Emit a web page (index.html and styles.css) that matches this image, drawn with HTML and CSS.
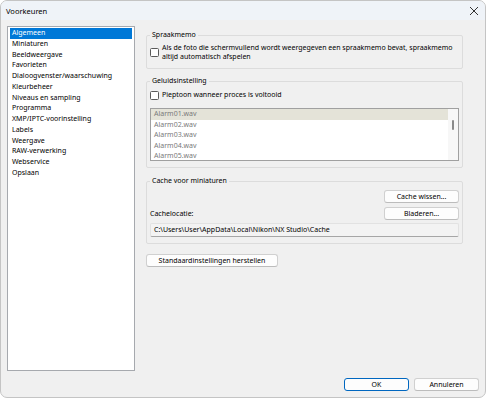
FILE: index.html
```html
<!DOCTYPE html>
<html lang="nl">
<head>
  <meta charset="UTF-8">
  <title>Voorkeuren</title>
  <link rel="stylesheet" href="styles.css">
</head>
<body>

  <div class="window">
    <div class="titlebar">
      <span class="title">Voorkeuren</span>
      <svg class="close" width="10" height="10" viewBox="0 0 10 10">
        <path d="M1 1 L9 9 M9 1 L1 9" stroke="#333" stroke-width="1" fill="none"/>
      </svg>
    </div>

    <div class="main">
      <ul class="nav">
        <li class="selected">Algemeen</li>
        <li>Miniaturen</li>
        <li>Beeldweergave</li>
        <li>Favorieten</li>
        <li>Dialoogvenster/waarschuwing</li>
        <li>Kleurbeheer</li>
        <li>Niveaus en sampling</li>
        <li>Programma</li>
        <li>XMP/IPTC-voorinstelling</li>
        <li>Labels</li>
        <li>Weergave</li>
        <li>RAW-verwerking</li>
        <li>Webservice</li>
        <li>Opslaan</li>
      </ul>

      <div class="panel">
        <fieldset class="group group-memo">
          <legend>Spraakmemo</legend>
          <label class="check">
            <span class="box"></span>
            <span>Als de foto die schermvullend wordt weergegeven een spraakmemo bevat, spraakmemo altijd automatisch afspelen</span>
          </label>
        </fieldset>

        <fieldset class="group group-sound">
          <legend>Geluidsinstelling</legend>
          <label class="check">
            <span class="box"></span>
            <span>Pieptoon wanneer proces is voltooid</span>
          </label>
          <div class="listbox">
            <ul class="sounds">
              <li class="current">Alarm01.wav</li>
              <li>Alarm02.wav</li>
              <li>Alarm03.wav</li>
              <li>Alarm04.wav</li>
              <li>Alarm05.wav</li>
            </ul>
            <div class="scrollbar"><div class="thumb"></div></div>
          </div>
        </fieldset>

        <fieldset class="group group-cache">
          <legend>Cache voor miniaturen</legend>
          <div class="row row-end">
            <button class="btn btn-side">Cache wissen...</button>
          </div>
          <div class="row">
            <span>Cachelocatie:</span>
            <button class="btn btn-side">Bladeren...</button>
          </div>
          <div class="path">C:\Users\User\AppData\Local\Nikon\NX Studio\Cache</div>
        </fieldset>

        <button class="btn btn-reset">Standaardinstellingen herstellen</button>
      </div>
    </div>

    <div class="footer">
      <button class="btn btn-ok">OK</button>
      <button class="btn">Annuleren</button>
    </div>
  </div>

</body>
</html>
```

FILE: styles.css
```css
body {
  margin: 0;
  background: #ffffff;
  font-family: "Noto Sans", Arial, sans-serif;
  font-size: 7px;
  color: #000;
}

.window {
  width: 486px;
  height: 398px;
  box-sizing: border-box;
  border: 1px solid #c4c4c4;
  border-radius: 7px;
  background: #f0f0f0;
  overflow: hidden;
  display: flex;
  flex-direction: column;
}

.titlebar {
  height: 19px;
  background: #eff3f8;
  display: flex;
  align-items: center;
  justify-content: space-between;
  padding: 0 5px 0 5px;
  font-size: 7.5px;
}

.close {
  margin-right: 1px;
}

.main {
  display: flex;
  padding: 6px 0 0 6px;
}

.nav {
  list-style: none;
  margin: 0;
  width: 128px;
  height: 345px;
  box-sizing: border-box;
  padding: 1px 2px;
  border: 1px solid #a6a9ae;
  background: #fff;
}

.nav li {
  line-height: 10.77px;
  height: 10.77px;
  padding-left: 2px;
  white-space: nowrap;
}

.nav li.selected {
  background: #0078d7;
  color: #fff;
}

.panel {
  margin-left: 11px;
  width: 317px;
  padding-top: 4px;
}

.group {
  margin: 0 0 8px 0;
  padding: 0 3px;
  border: 1px solid #dcdcdc;
  border-radius: 2px;
}

.group legend {
  padding: 0 2px;
  line-height: 10px;
}

.check {
  display: flex;
  align-items: center;
  line-height: 8.5px;
}

.box {
  flex: none;
  width: 7px;
  height: 7px;
  border: 1px solid #5a5a5a;
  border-radius: 1.5px;
  background: #fff;
  margin-right: 3px;
}

.group-memo {
  padding-top: 4px;
  padding-bottom: 7px;
  margin-bottom: 7px;
}

.group-sound .check {
  padding-top: 5px;
  padding-bottom: 8px;
}

.group-sound {
  padding-bottom: 6px;
}

.listbox {
  height: 53px;
  box-sizing: border-box;
  border: 1px solid #a0a0a0;
  background: #fff;
  display: flex;
}

.sounds {
  list-style: none;
  margin: 0;
  padding: 0;
  flex: 1;
  color: #7a7a7a;
}

.sounds li {
  line-height: 10.5px;
  padding-left: 3px;
}

.sounds li.current {
  background: #e4e3d8;
}

.scrollbar {
  width: 10px;
  background: #f7f7f7;
  display: flex;
  justify-content: center;
  padding-top: 11px;
  box-sizing: border-box;
}

.thumb {
  width: 2px;
  height: 10px;
  background: #8a8a8a;
  border-radius: 1px;
}

.group-cache {
  padding-bottom: 6px;
}

.row {
  display: flex;
  align-items: center;
  justify-content: space-between;
  margin-top: 4px;
}

.row-end {
  justify-content: flex-end;
  margin-top: 4px;
}

.btn {
  font-family: "Noto Sans", Arial, sans-serif;
  font-size: 7px;
  color: #000;
  height: 13px;
  box-sizing: border-box;
  padding: 0;
  background: #fdfdfd;
  border: 1px solid #d0d0d0;
  border-bottom-color: #bcbcbc;
  border-radius: 3px;
  line-height: 10px;
}

.btn-side {
  width: 75px;
}

.path {
  margin-top: 3px;
  height: 12px;
  line-height: 12px;
  padding-left: 3px;
  background: #f3f3f3;
  border: 1px solid #e2e2e2;
  border-bottom-color: #a6a6a6;
  border-radius: 2px;
}

.btn-reset {
  width: 132px;
  margin-top: 2px;
}

.footer {
  display: flex;
  justify-content: flex-end;
  gap: 5px;
  padding: 7px 6px 0 0;
}

.footer .btn {
  width: 65px;
}

.btn-ok {
  border: 1px solid #0067c0;
}
```
